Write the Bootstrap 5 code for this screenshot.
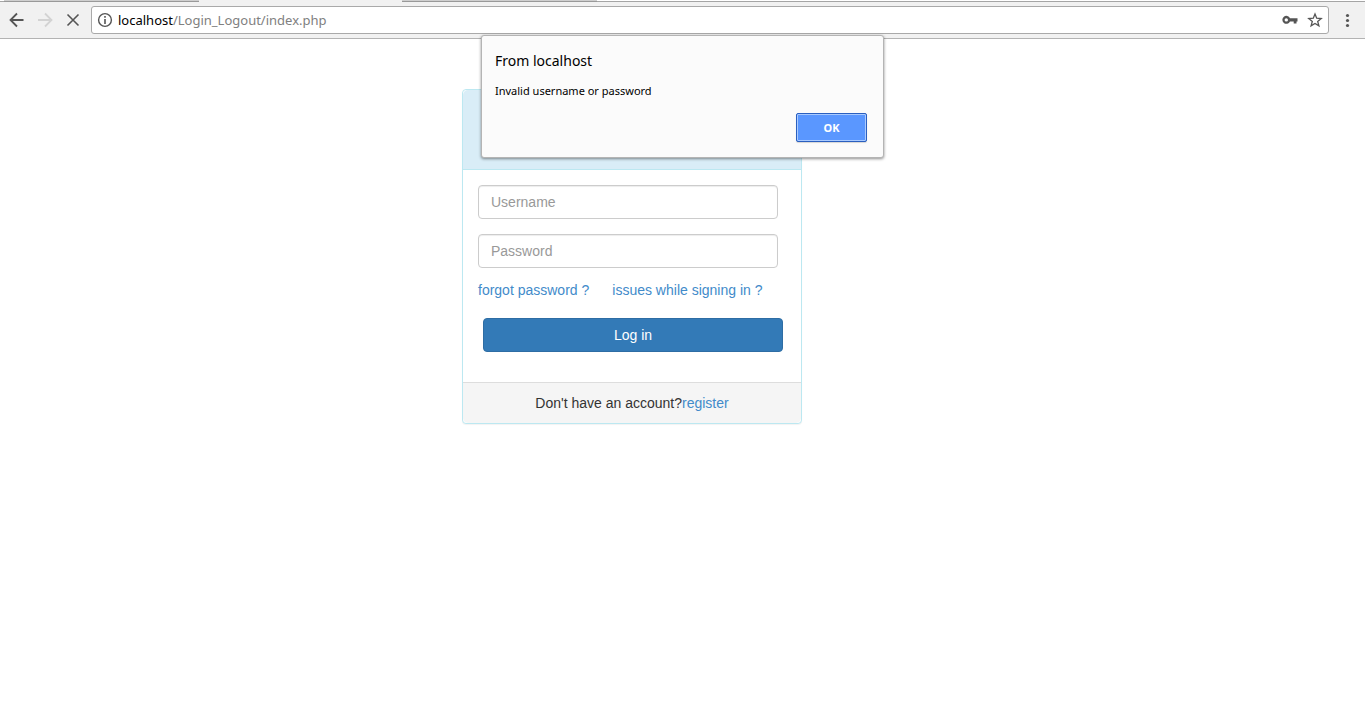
<!DOCTYPE html>
<html lang="en">
<head>
<meta charset="utf-8">
<meta name="viewport" content="width=device-width, initial-scale=1">
<title>Login</title>
<link href="https://cdn.jsdelivr.net/npm/bootstrap@5.3.0/dist/css/bootstrap.min.css" rel="stylesheet">
<style>
  body { font: 14px/20px "Liberation Sans", Arial, sans-serif; color: #333; background: #fff; }
  a { color: #428bca; text-decoration: none; }

  /* browser chrome */
  .browser { font-family: "Noto Sans", "Open Sans", sans-serif; }
  .tab-strip { height: 2px; padding-left: 4px; border-bottom: 1px solid #a5a5a5; }
  .tab-edge { width: 195px; height: 2px; background: #cfcfcf; border-bottom: 1px solid #999; }
  .tab-open { width: 203px; background: #f1f1f1; }
  .toolbar { height: 37px; padding: 0 8px 0 7px; background: #f1f1f1; border-bottom: 1px solid #b3b3b3; }
  .tool { width: 20px; height: 20px; margin-right: 8px; color: #555; }
  .address { height: 28px; padding: 0 5px; background: #fff; border: 1px solid #a9a9a9; border-radius: 3px; }
  .address-text { margin-left: 5px; font-size: 13px; color: #808080; }
  .address-text b { font-weight: 400; color: #000; }

  /* alert dialog */
  .alert-box { top: 35px; width: 403px; max-width: 100%; padding: 15px 16px 15px 13px; background: #fbfbfb; border: 1px solid #b4b4b4; border-radius: 3px; box-shadow: 0 1px 3px rgba(0,0,0,.45); color: #000; z-index: 10; }
  .alert-box h1 { font-size: 14px; line-height: 20px; margin: 0 0 12px; }
  .alert-box p { font-size: 11px; line-height: 16px; margin: 0 0 14px; }
  .btn-ok { width: 71px; height: 29px; font-size: 11px; font-weight: 700; line-height: 16px; color: #fff; background: #5a97ff; border: 1px solid #2a5fc0; border-radius: 2px; box-shadow: inset 0 0 0 1px #a9caff, 0 1px 1px rgba(0,0,0,.15); }

  /* login panel */
  .page { max-width: 1171px; padding: 50px 15px; }
  .login { width: 340px; max-width: 100%; border: 1px solid #bce8f1; border-radius: 4px; box-shadow: 0 1px 1px rgba(0,0,0,.05); }
  .login .card-header { height: 80px; background: #d9edf7; border-color: #bce8f1; }
  .login .card-body { padding: 15px 15px 30px; color: #333; }
  .login .card-footer { padding: 10px 15px; background: #f5f5f5; border-color: #ddd; color: #333; }
  .field { width: 300px; max-width: 100%; }
  .field.form-control { height: 34px; margin-bottom: 15px; padding: 6px 12px; font-size: 14px; line-height: 20px; border: 1px solid #ccc; border-radius: 4px; box-shadow: inset 0 1px 1px rgba(0,0,0,.075); }
  .field.form-control::placeholder { color: #999; }
  .help-links { gap: 23px; margin: -3px 0 18px; }
  .btn-login { height: 34px; margin-left: 5px; font-size: 14px; line-height: 20px; padding: 6px 12px; color: #fff; background: #337ab7; border: 1px solid #2e6da4; border-radius: 4px; }
  @media (min-width: 992px) { .login { margin-left: 350px; } }
</style>
</head>
<body>
<header class="browser">
  <div class="tab-strip d-flex">
    <div class="tab-edge"></div><div class="tab-edge tab-open border-0"></div><div class="tab-edge"></div>
  </div>
  <div class="toolbar d-flex align-items-center">
    <svg class="tool" viewBox="0 0 20 20" fill="none" stroke="currentColor" stroke-width="1.800" aria-hidden="true"><path d="M16.500 10H4M10 3.500 3.500 10 10 16.500"/></svg>
    <svg class="tool" viewBox="0 0 20 20" fill="none" stroke="#d3d3d3" stroke-width="1.800" aria-hidden="true"><path d="M3 10h13M10 3.500 16.500 10 10 16.500"/></svg>
    <svg class="tool" viewBox="0 0 20 20" fill="none" stroke="currentColor" stroke-width="1.600" aria-hidden="true"><path d="m4.500 4.500 11 11m0-11-11 11"/></svg>
    <div class="address d-flex flex-grow-1 align-items-center">
      <svg width="16" height="16" viewBox="0 0 16 16" fill="none" stroke="#555" aria-hidden="true"><circle cx="8" cy="8" r="6.400" stroke-width="1.400"/><path d="M8 7v5M8 4v1.700" stroke-width="1.600"/></svg>
      <div class="address-text flex-grow-1"><b>localhost</b>/Login_Logout/index.php</div>
      <svg class="me-2" width="18" height="16" viewBox="0 0 18 16" aria-hidden="true"><path fill="#555" fill-rule="evenodd" d="M9 6.200h7.500v3.200h-1v2h-2.800v-2H9a4 4 0 1 1 0-3.200ZM5.300 6.200a1.700 1.700 0 1 0 0 3.400 1.700 1.700 0 0 0 0-3.400Z"/></svg>
      <svg width="16" height="16" viewBox="0 0 16 16" fill="none" stroke="#555" stroke-width="1.300" aria-hidden="true"><path d="m8 2 1.700 4.200 4.500.3-3.500 2.900 1.200 4.400L8 11.400l-3.900 2.400 1.200-4.400-3.500-2.900 4.500-.3Z"/></svg>
    </div>
    <svg class="ms-2" width="20" height="20" viewBox="0 0 20 20" fill="#555" aria-hidden="true"><circle cx="10.500" cy="5.500" r="1.600"/><circle cx="10.500" cy="10.500" r="1.600"/><circle cx="10.500" cy="15.500" r="1.600"/></svg>
  </div>
</header>

<section class="alert-box browser position-absolute start-0 end-0 mx-auto" role="alertdialog" aria-labelledby="alert-title" aria-describedby="alert-text">
  <h1 id="alert-title" class="fw-normal">From localhost</h1>
  <p id="alert-text">Invalid username or password</p>
  <div class="d-flex justify-content-end"><button type="button" class="btn-ok p-0">OK</button></div>
</section>

<main class="page container">
  <form class="login card">
    <div class="card-header"></div>
    <div class="card-body">
      <input class="form-control field" type="text" placeholder="Username" aria-label="Username">
      <input class="form-control field" type="password" placeholder="Password" aria-label="Password">
      <div class="help-links d-flex"><a href="#">forgot password ?</a><a href="#">issues while signing in ?</a></div>
      <button type="submit" class="btn btn-login field">Log in</button>
    </div>
    <div class="card-footer text-center">Don't have an account?<a href="#">register</a></div>
  </form>
</main>
<script src="https://cdn.jsdelivr.net/npm/bootstrap@5.3.0/dist/js/bootstrap.bundle.min.js"></script>
</body>
</html>
